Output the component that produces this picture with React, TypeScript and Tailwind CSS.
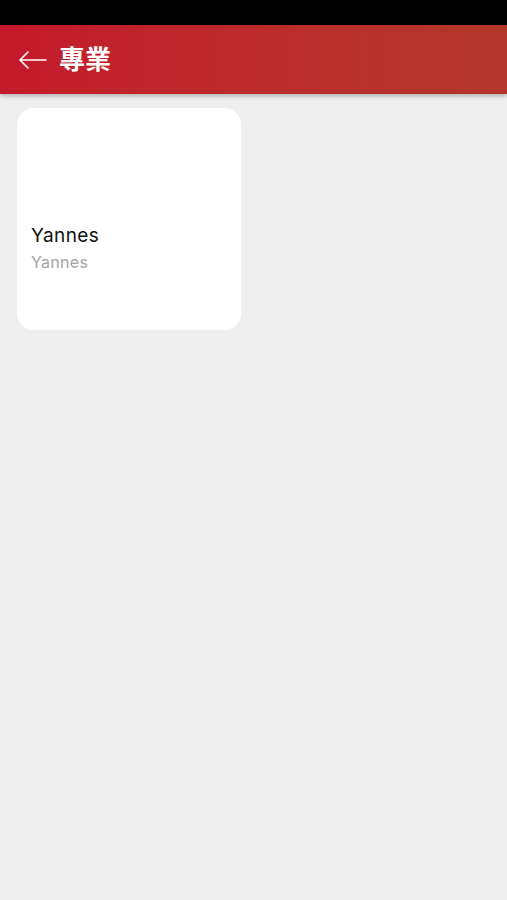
type Project = {
  name: string;
  subtitle: string;
};

const projects: Project[] = [{ name: "Yannes", subtitle: "Yannes" }];

function BackArrow() {
  return (
    <svg width="30" height="20" viewBox="0 0 30 20" fill="none" className="text-white">
      <path
        d="M28 10H2M2 10L10 2M2 10L10 18"
        stroke="currentColor"
        strokeWidth="1.6"
        strokeLinecap="round"
        strokeLinejoin="round"
      />
    </svg>
  );
}

export default function App() {
  return (
    <div className="flex min-h-[900px] w-full flex-col bg-[#eeeeee] font-['Inter','Noto_Sans_CJK_TC',sans-serif]">
      <div className="h-[25px] bg-black" />

      <header className="relative z-10 flex h-[69px] items-center gap-[11px] bg-gradient-to-r from-[#c4192b] to-[#b3372a] pl-[18px] shadow-[0_2px_4px_rgba(0,0,0,0.25)]">
        <BackArrow />
        <h1 className="text-[26px] font-bold leading-none text-white">專業</h1>
      </header>

      <main className="grid grid-cols-2 gap-[17px] px-[17px] pt-[14px]">
        {projects.map((p) => (
          <div key={p.name} className="h-[222px] w-[224px] rounded-[16px] bg-white px-[14px] pt-[115px]">
            <p className="text-[19px] font-normal leading-[26px] tracking-[0.4px] text-[#111111]">
              {p.name}
            </p>
            <p className="text-[16px] leading-[26px] tracking-[0.3px] text-[#a3a3a3]">{p.subtitle}</p>
          </div>
        ))}
      </main>
    </div>
  );
}
